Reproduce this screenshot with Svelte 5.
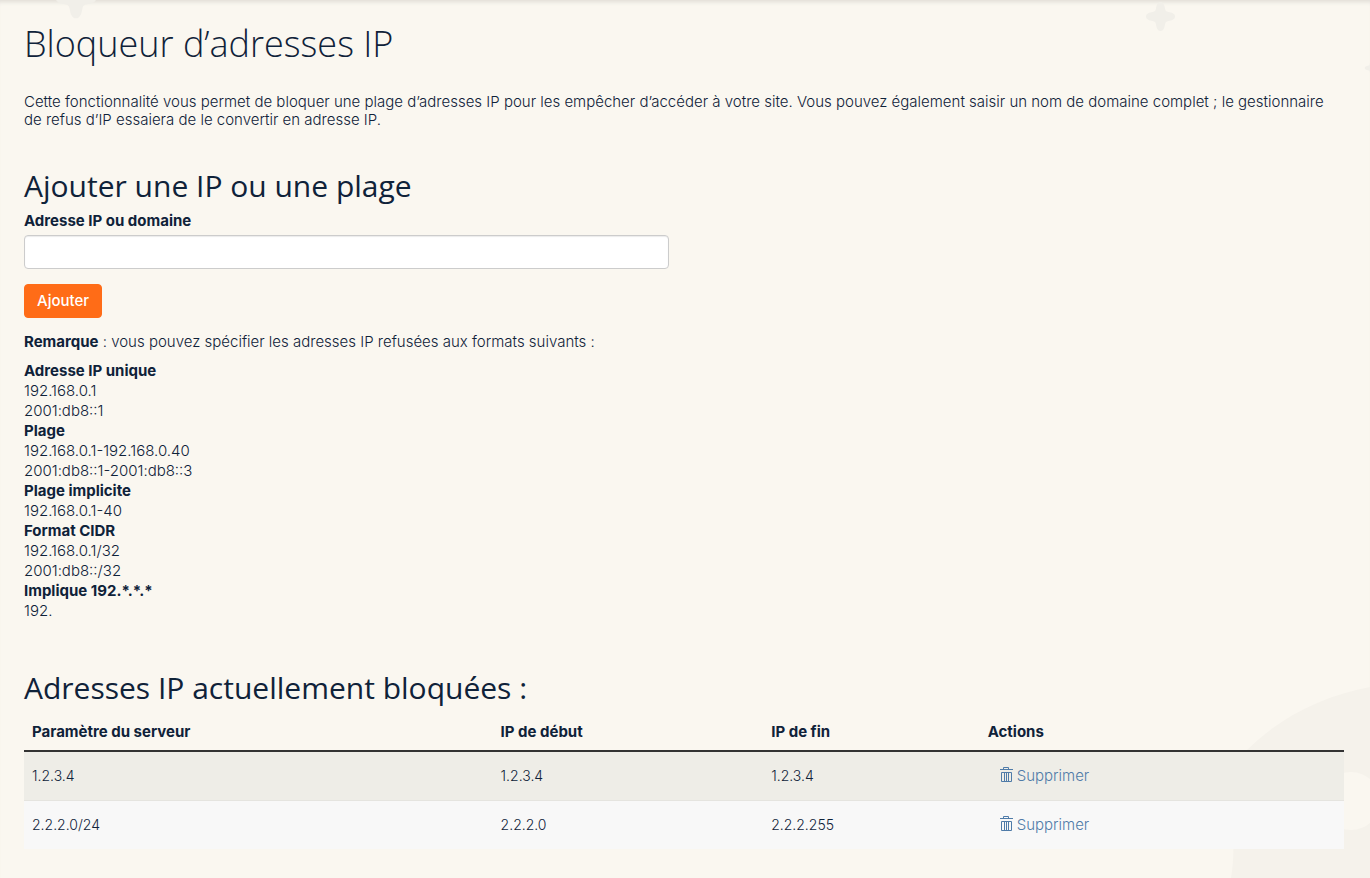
<script>
  const formats = [
    { name: 'Adresse IP unique', examples: ['192.168.0.1', '2001:db8::1'] },
    { name: 'Plage', examples: ['192.168.0.1-192.168.0.40', '2001:db8::1-2001:db8::3'] },
    { name: 'Plage implicite', examples: ['192.168.0.1-40'] },
    { name: 'Format CIDR', examples: ['192.168.0.1/32', '2001:db8::/32'] },
    { name: 'Implique 192.*.*.*', examples: ['192.'] },
  ];
  const blocked = [
    { setting: '1.2.3.4', start: '1.2.3.4', end: '1.2.3.4' },
    { setting: '2.2.2.0/24', start: '2.2.2.0', end: '2.2.2.255' },
  ];
  let address = $state('');
</script>

{#snippet star()}
  <path d="M0 -14.5C3 -14.5 4 -11 4.500 -8C5 -5.5 5.500 -5 8 -4.500C11 -4 14.500 -3 14.500 0C14.500 3 11 4 8 4.500C5.500 5 5 5.500 4.500 8C4 11 3 14.500 0 14.500C-3 14.500 -4 11 -4.500 8C-5 5.500 -5.500 5 -8 4.500C-11 4 -14.500 3 -14.500 0C-14.500 -3 -11 -4 -8 -4.500C-5.500 -5 -5 -5.500 -4.500 -8C-4 -11 -3 -14.500 0 -14.500Z" />
{/snippet}

<div class="page">
  <svg class="decor top" viewBox="0 0 1370 100" aria-hidden="true">
    <g fill="#f1efe9">
      <g transform="translate(76 -2) scale(1.4)">{@render star()}</g>
      <g transform="translate(1160.500 16.500)">{@render star()}</g>
      <g transform="translate(1372 68) scale(0.5)">{@render star()}</g>
    </g>
  </svg>
  <svg class="decor bottom" viewBox="0 0 140 192" aria-hidden="true">
    <path fill="#f5f2eb" d="M140 1C92 10 49 32 17 64C0 84 3 130 3 150C4 166 3 180 1 192H140Z" />
    <circle cx="121" cy="115" r="29" fill="#faf7f0" />
  </svg>

  <main>
    <h1>Bloqueur d’adresses IP</h1>
    <p class="intro">
      Cette fonctionnalité vous permet de bloquer une plage d’adresses IP pour les empêcher d’accéder à votre site. Vous pouvez également saisir un nom de domaine complet ; le gestionnaire de refus d’IP essaiera de le convertir en adresse IP.
    </p>

    <section>
      <h2>Ajouter une IP ou une plage</h2>
      <form onsubmit={(e) => e.preventDefault()}>
        <label for="address">Adresse IP ou domaine</label>
        <input id="address" type="text" bind:value={address} />
        <button type="submit">Ajouter</button>
      </form>
      <p><strong>Remarque</strong> : vous pouvez spécifier les adresses IP refusées aux formats suivants :</p>
      <dl>
        {#each formats as format}
          <dt>{format.name}</dt>
          {#each format.examples as example}
            <dd>{example}</dd>
          {/each}
        {/each}
      </dl>
    </section>

    <section>
      <h2>Adresses IP actuellement bloquées :</h2>
      <table>
        <thead>
          <tr>
            <th scope="col">Paramètre du serveur</th>
            <th scope="col">IP de début</th>
            <th scope="col">IP de fin</th>
            <th scope="col">Actions</th>
          </tr>
        </thead>
        <tbody>
          {#each blocked as row}
            <tr>
              <td>{row.setting}</td>
              <td>{row.start}</td>
              <td>{row.end}</td>
              <td>
                <a href="#supprimer">
                  <svg viewBox="0 0 14 16" aria-hidden="true">
                    <path fill="none" stroke="currentColor" d="M0 2.500H13M3.500 2V.5H8.500V2M1.500 5.500H11.500V14.500H1.500ZM4.500 5V14M6.500 5V14M8.500 5V14" />
                  </svg>
                  <span>Supprimer</span>
                </a>
              </td>
            </tr>
          {/each}
        </tbody>
      </table>
    </section>
  </main>
</div>

<style>
  :global(body) {
    margin: 0;
    background: #faf7f0;
  }
  .page {
    position: relative;
    min-height: 100vh;
    box-sizing: border-box;
    overflow: hidden;
    background: #faf7f0;
    box-shadow: inset 0 5px 4px -3px #e0ddd6;
    color: #0f2239;
    font: 300 15px/20px Inter, "Liberation Sans", sans-serif;
  }
  .decor {
    position: absolute;
    right: 0;
  }
  .top {
    top: 0;
    width: 100%;
  }
  .bottom {
    bottom: 0;
    width: 140px;
  }
  main {
    position: relative;
    padding: 24px 26px 28px 24px;
  }
  h1, h2 {
    margin: 0;
    font-family: "Open Sans", sans-serif;
  }
  h1 {
    font-size: 36px;
    font-weight: 300;
    line-height: 40px;
  }
  h2 {
    font-size: 30px;
    font-weight: 400;
    line-height: 34px;
  }
  p {
    margin: 0;
  }
  .intro {
    margin: 29px 0 40px;
    line-height: 18px;
  }
  form {
    display: flex;
    flex-direction: column;
    align-items: flex-start;
  }
  label {
    margin: 8px 0 4px;
    font-weight: 700;
  }
  input {
    box-sizing: border-box;
    width: calc(50% - 15px);
    height: 34px;
    padding: 6px 12px;
    border: 1px solid #ccc;
    border-radius: 4px;
    background: #fff;
    box-shadow: inset 0 1px 1px rgb(0 0 0 / 8%);
    font: inherit;
    color: inherit;
  }
  button {
    margin: 15px 0 14px;
    padding: 6px 12px;
    border: 1px solid #ff6c17;
    border-radius: 4px;
    background: #ff6c17;
    color: #fff;
    font: 500 15px/20px Inter, "Liberation Sans", sans-serif;
  }
  strong, dt, th {
    font-weight: 700;
  }
  dl {
    margin: 9px 0 50px;
  }
  dd {
    margin: 0;
  }
  table {
    width: 100%;
    margin-top: 9px;
    border-collapse: separate;
    border-spacing: 0;
    table-layout: fixed;
  }
  th, td {
    padding: 8px;
    text-align: left;
  }
  th {
    border-bottom: 2px solid #333;
  }
  th:nth-child(1) {
    width: 35.5%;
    box-sizing: border-box;
  }
  th:nth-child(2) {
    width: 20.5%;
    box-sizing: border-box;
  }
  th:nth-child(3) {
    width: 16.4%;
    box-sizing: border-box;
  }
  td {
    height: 32px;
    font-size: 14px;
  }
  tbody tr {
    background: #f8f8f8;
  }
  tbody tr:first-child {
    background: #eeede7;
  }
  tbody tr + tr td {
    border-top: 1px solid #e5e4df;
  }
  a {
    display: flex;
    align-items: flex-start;
    width: fit-content;
    gap: 3px;
    padding: 0 12px;
    color: #4f7ba8;
    font-size: 15px;
    line-height: 22px;
    text-decoration: none;
  }
  a svg {
    width: 14px;
    height: 16px;
    margin-top: 2px;
  }
</style>
